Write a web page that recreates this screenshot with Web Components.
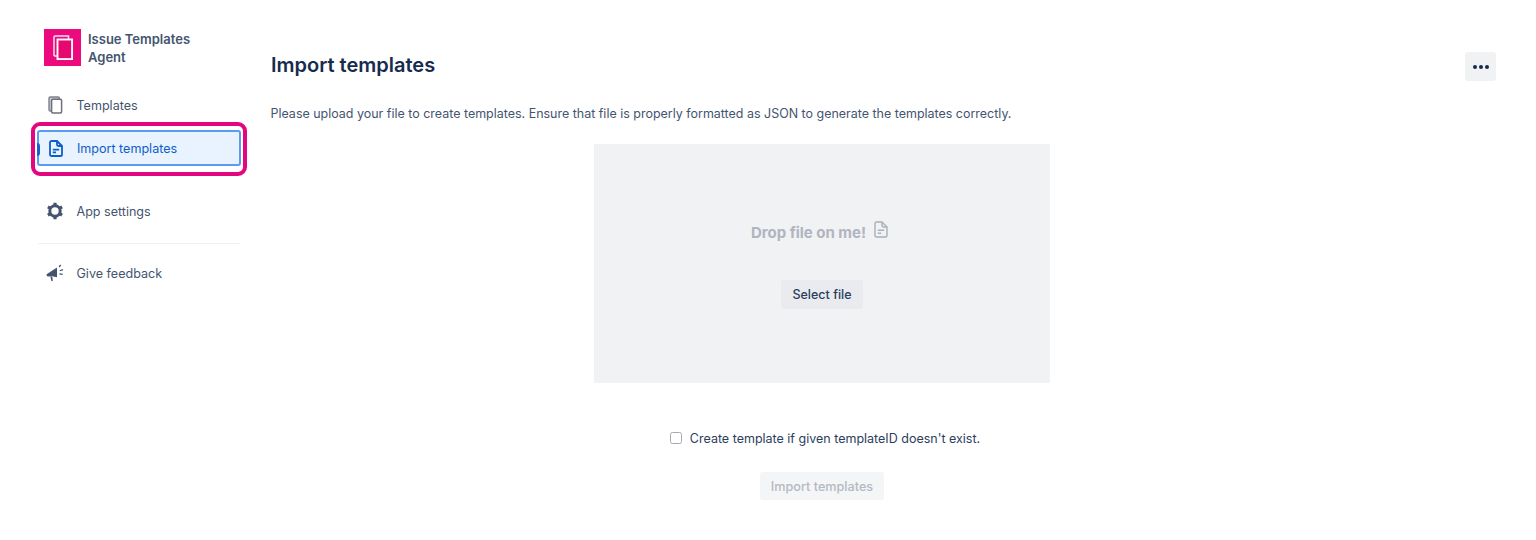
<!DOCTYPE html>
<html><head><meta charset="utf-8">
<style>
html,body{margin:0;padding:0;background:#fff;height:540px;overflow:hidden}
body{font-family:Inter,"Liberation Sans",sans-serif;color:#172b4d}
</style></head>
<body>
<app-shell>
  <side-nav slot="side"></side-nav>
  <import-page slot="main"></import-page>
</app-shell>
<script>
const ICONS={
 copy:'<svg width="15" height="18" viewBox="0 0 15 18" fill="none"><rect x="1" y="1" width="10.4" height="14" rx="1.2" fill="#c9ccd2" stroke="#7d828c" stroke-width="1.4"/><rect x="3.6" y="3.2" width="10" height="13.8" rx="1.2" fill="#fff" stroke="#6b707b" stroke-width="1.5"/></svg>',
 doc:'<svg width="14" height="17" viewBox="0 0 14 17" fill="none" stroke="currentColor" stroke-width="1.8" stroke-linejoin="round"><path d="M2.6 1H8l5 5v8.4a1.6 1.6 0 0 1-1.6 1.6H2.6A1.6 1.6 0 0 1 1 14.4V2.6A1.6 1.6 0 0 1 2.6 1Z"/><path d="M8 1v3.6A1.4 1.4 0 0 0 9.4 6H13"/><path d="M3.8 9.6h6.4M3.8 12.4h3.2"/></svg>',
 gear:'<svg width="18" height="18" viewBox="0 0 18 18" fill="none" stroke="currentColor"><circle cx="9" cy="9" r="5.2" stroke-width="3"/><path stroke-width="3.2" d="M9 .8v2.4M9 14.8v2.4M1.9 4.9 4 6.1M14 11.9l2.1 1.2M1.9 13.1 4 11.9M14 6.1l2.1-1.2"/></svg>',
 horn:'<svg width="20" height="18" viewBox="0 0 20 18" fill="currentColor"><path d="M.6 10.2 11 3.6v9.6l-5-1-3.6.3A1.7 1.7 0 0 1 .6 11.2Z"/><path d="m4.4 12.6 1.8-.2.6 4.4-1.4.4Z"/><path d="M12.6 2.6 14.2.6l1 .8-1.7 2ZM13.6 6.2l3.2-1.2.4 1.2-3.2 1.1ZM13.6 9.2l3.2.5-.2 1.3-3.2-.6Z"/></svg>'
};
const def=(name,html)=>{
  customElements.define(name,class extends HTMLElement{
    constructor(){super();this.attachShadow({mode:'open'}).innerHTML=html;}
  });
};

def('app-shell',`<style>
:host{display:flex;width:1536px;height:540px;box-sizing:border-box}
.s{flex:0 0 271px;display:block}
.m{flex:1;display:block;min-width:0}
</style><div class="s"><slot name="side"></slot></div><div class="m"><slot name="main"></slot></div>`);

def('nav-item',`<style>
:host{display:flex;align-items:center;height:36px;box-sizing:border-box;padding-left:10px;font-size:12.55px;color:#44546f;font-weight:400;position:relative;border-radius:3px;border:1.5px solid transparent}
:host([active]){background:#e9f2ff;color:#0c5fc8;border:2px solid #5a9cf0;padding-left:9.5px}
:host([active])::before{content:"";position:absolute;left:-2px;top:11px;width:3px;height:13px;background:#1463c8;border-radius:0 3px 3px 0}
.i{width:28.5px;flex:none;display:flex;justify-content:flex-start;align-items:center}
</style><span class="i"><slot name="icon"></slot></span><slot></slot>`);

def('side-nav',`<style>
:host{display:block;padding:29px 0 0 30px;box-sizing:border-box;width:271px}
.brand{display:flex;gap:7px;margin-left:14px;height:37px}
.logo{width:37px;height:37px;background:#ec0a7e;display:flex;align-items:center;justify-content:center;flex:none}
.name{font-size:13px;font-weight:600;line-height:18px;color:#44546f;width:110px;margin-top:.5px}
.nav{margin-top:21px;width:218px}
.plain{margin:0 7px 0 7px}
.hl{border:4px solid #e3077f;border-radius:9px;padding:4px 2px;margin:-1px 0 0 1px;width:216px;box-sizing:border-box;height:54px;background:#fff}
.sec{margin-top:17px}
hr{border:0;border-top:1px solid #f0f1f3;margin:14px 7px 11px 9px;position:relative;left:-1px}
svg{display:block}
</style>
<div class="brand"><div class="logo"><svg width="20" height="25" viewBox="0 0 20 25" fill="none"><path stroke="#ffe0f0" stroke-width="1.5" d="M1 21V2.2A1.2 1.2 0 0 1 2.2 1H15.5V4M1 21H4"/><rect x="4.5" y="4.5" width="14.6" height="19.6" fill="#e6086f" stroke="#fff" stroke-width="1.9"/></svg></div>
<div class="name">Issue Templates Agent</div></div>
<div class="nav">
<nav-item class="plain"><span slot="icon">${ICONS.copy}</span>Templates</nav-item>
<div class="hl"><nav-item active><span slot="icon" style="margin-left:.5px">${ICONS.doc}</span>Import templates</nav-item></div>
<nav-item class="plain sec"><span slot="icon" style="margin-left:-2px">${ICONS.gear}</span>App settings</nav-item>
<hr>
<nav-item class="plain"><span slot="icon" style="margin-left:-2.5px">${ICONS.horn}</span>Give feedback</nav-item>
</div>`);

def('ui-button',`<style>
:host{display:inline-flex;align-items:center;justify-content:center;background:#e9ebee;color:#2c3e5d;font-size:12.5px;font-weight:500;border-radius:3px;height:29px;box-sizing:border-box;padding:0 11px}
:host([disabled]){background:#f4f5f6;color:#b3b9c4;height:28px;padding:0 11px;font-size:12.65px}
:host([icon]){width:31px;height:29px;padding:0;background:#f1f2f4;color:#172b4d}
</style><slot></slot>`);

def('drop-zone',`<style>
:host{display:flex;flex-direction:column;align-items:center;width:456px;height:239px;background:#f1f2f4;box-sizing:border-box;padding-top:78px}
.t{display:flex;align-items:flex-start;gap:8px;height:20px;font-size:15px;font-weight:700;color:#b0b5c0;line-height:20px;padding-right:4px}
.t span{margin-left:-1px;letter-spacing:-.02px;position:relative;top:.5px}
.t svg{margin-top:-1px;display:block;color:#a9afbb}
.b{margin-top:38px}
</style><div class="t"><span>Drop file on me!</span><svg width="14" height="17" viewBox="0 0 14 17" fill="none" stroke="currentColor" stroke-width="1.4" stroke-linejoin="round"><path d="M2.6 1H8l5 5v8.4a1.6 1.6 0 0 1-1.6 1.6H2.6A1.6 1.6 0 0 1 1 14.4V2.6A1.6 1.6 0 0 1 2.6 1Z"/><path d="M8 1v3.6A1.4 1.4 0 0 0 9.4 6H13"/><path d="M3.8 9.2h6.4M3.8 12.2h3.4"/></svg></div>
<div class="b"><ui-button>Select file</ui-button></div>`);

def('check-row',`<style>
:host{display:flex;align-items:center;gap:8px;font-size:12.5px;color:#2c3e5d;height:18px}
.c{width:12px;height:12px;border:1px solid #a4a9b4;border-radius:2.5px;box-sizing:border-box;background:#fff}
</style><span class="c"></span><slot></slot>`);

def('import-page',`<style>
:host{display:block;box-sizing:border-box;width:1225px;padding-top:52px}
header{display:flex;justify-content:space-between;align-items:flex-start;height:29px}
h1{margin:0;font-size:20px;font-weight:600;color:#172b4d;line-height:26px}
p{margin:24px 0 0 -.5px;font-size:12.485px;color:#44546f;line-height:18px}
.c{display:flex;flex-direction:column;align-items:center;width:1102px}
.z{margin-top:21px}
.r{margin-top:46px;margin-left:6px}
.d{margin-top:25px}
.dots{display:flex;gap:2px}
.dots i{width:4px;height:4px;background:#172b4d;border-radius:50%;display:block}
</style>
<header><h1>Import templates</h1><ui-button icon><span class="dots"><i></i><i></i><i></i></span></ui-button></header>
<p>Please upload your file to create templates. Ensure that file is properly formatted as JSON to generate the templates correctly.</p>
<div class="c">
<drop-zone class="z"></drop-zone>
<check-row class="r">Create template if given templateID doesn't exist.</check-row>
<ui-button class="d" disabled>Import templates</ui-button>
</div>`);
</script>
</body></html>
